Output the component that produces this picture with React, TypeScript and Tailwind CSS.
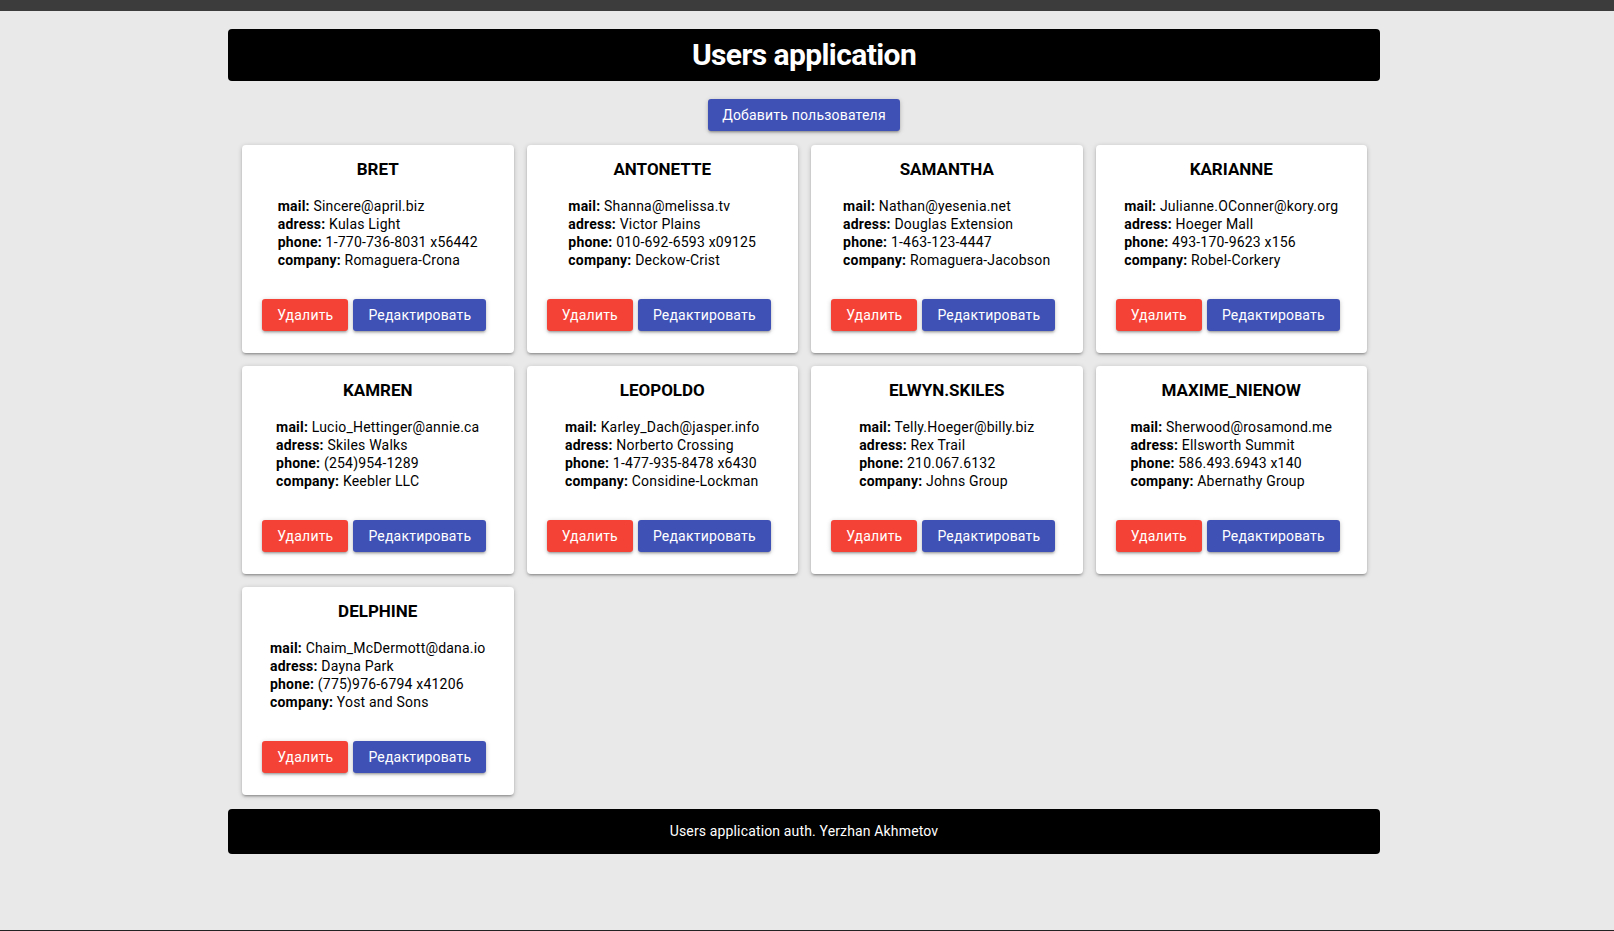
import React from "react";

type User = {
  name: string;
  mail: string;
  adress: string;
  phone: string;
  company: string;
};

const users: User[] = [
  { name: "BRET", mail: "Sincere@april.biz", adress: "Kulas Light", phone: "1-770-736-8031 x56442", company: "Romaguera-Crona" },
  { name: "ANTONETTE", mail: "Shanna@melissa.tv", adress: "Victor Plains", phone: "010-692-6593 x09125", company: "Deckow-Crist" },
  { name: "SAMANTHA", mail: "Nathan@yesenia.net", adress: "Douglas Extension", phone: "1-463-123-4447", company: "Romaguera-Jacobson" },
  { name: "KARIANNE", mail: "Julianne.OConner@kory.org", adress: "Hoeger Mall", phone: "493-170-9623 x156", company: "Robel-Corkery" },
  { name: "KAMREN", mail: "Lucio_Hettinger@annie.ca", adress: "Skiles Walks", phone: "(254)954-1289", company: "Keebler LLC" },
  { name: "LEOPOLDO", mail: "Karley_Dach@jasper.info", adress: "Norberto Crossing", phone: "1-477-935-8478 x6430", company: "Considine-Lockman" },
  { name: "ELWYN.SKILES", mail: "Telly.Hoeger@billy.biz", adress: "Rex Trail", phone: "210.067.6132", company: "Johns Group" },
  { name: "MAXIME_NIENOW", mail: "Sherwood@rosamond.me", adress: "Ellsworth Summit", phone: "586.493.6943 x140", company: "Abernathy Group" },
  { name: "DELPHINE", mail: "Chaim_McDermott@dana.io", adress: "Dayna Park", phone: "(775)976-6794 x41206", company: "Yost and Sons" },
];

const btnShadow =
  "shadow-[0_2px_2px_0_rgba(0,0,0,0.14),0_3px_1px_-2px_rgba(0,0,0,0.12),0_1px_5px_0_rgba(0,0,0,0.2)]";

function Card({ u }: { u: User }) {
  return (
    <div className="bg-white rounded-[4px] h-[208px] pt-[14px] shadow-[0_2px_2px_0_rgba(0,0,0,0.14),0_3px_1px_-2px_rgba(0,0,0,0.12),0_1px_5px_0_rgba(0,0,0,0.2)] flex flex-col items-center">
      <div className="text-[17px] leading-[20px] font-bold text-black">{u.name}</div>
      <div className="mt-[18px] text-[14px] leading-[18px] tracking-[0.2px] text-black text-left">
        <div><span className="font-bold">mail:</span> {u.mail}</div>
        <div><span className="font-bold">adress:</span> {u.adress}</div>
        <div><span className="font-bold">phone:</span> {u.phone}</div>
        <div><span className="font-bold">company:</span> {u.company}</div>
      </div>
      <div className="mt-[30px] flex gap-[5px] pr-[7px]">
        <button className={`h-8 px-[15px] rounded-[3px] bg-[#f44336] text-white text-[14px] tracking-[0.2px] ${btnShadow}`}>Удалить</button>
        <button className={`h-8 px-[15px] rounded-[3px] bg-[#3f51b5] text-white text-[14px] tracking-[0.2px] ${btnShadow}`}>Редактировать</button>
      </div>
    </div>
  );
}

export default function App() {
  return (
    <div
      className="h-[931px] bg-[#e9e9e9] flex flex-col border-b border-[#222]"
      style={{ fontFamily: "Roboto, 'Noto Sans', sans-serif" }}
    >
      <div className="h-[11px] bg-[#3c3c3c] shrink-0" />
      <div className="ml-[228px] w-[1152px] pt-[18px] flex flex-col">
        <header className="h-[52px] bg-black rounded-[4px] flex items-center justify-center">
          <h1 className="text-white text-[30px] font-bold leading-none tracking-[-0.6px]">Users application</h1>
        </header>
        <div className="mt-[18px] flex justify-center">
          <button className={`h-8 w-[192px] rounded-[3px] bg-[#3f51b5] text-white text-[14px] tracking-[0.2px] ${btnShadow}`}>
            Добавить пользователя
          </button>
        </div>
        <div className="mt-[14px] ml-[14px] w-[1125px] grid grid-cols-4 gap-x-[13px] gap-y-[13px]">
          {users.map((u) => (
            <Card key={u.name} u={u} />
          ))}
        </div>
        <footer className="mt-[14px] h-[45px] bg-black rounded-[4px] flex items-center justify-center text-white text-[14px] tracking-[0.15px]">
          Users application auth. Yerzhan Akhmetov
        </footer>
      </div>
    </div>
  );
}
